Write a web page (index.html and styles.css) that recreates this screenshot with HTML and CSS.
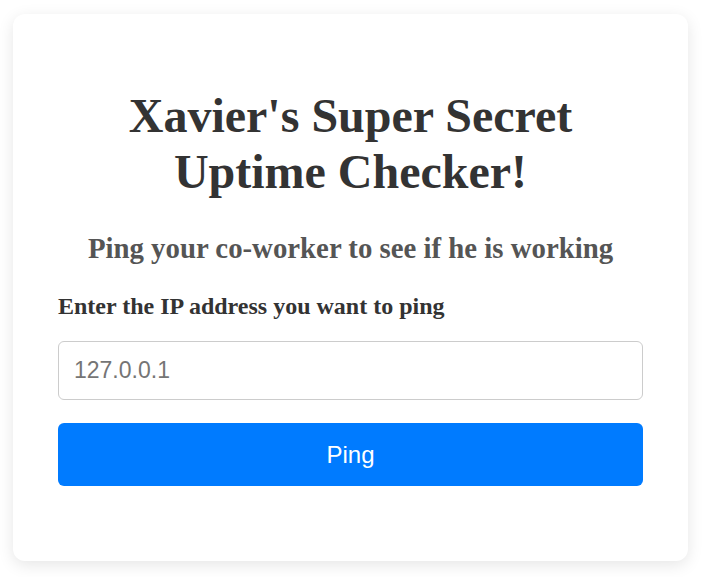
FILE: index.html
```html
<!DOCTYPE html>
<html lang="en">
<head>
<meta charset="utf-8">
<title>Uptime Checker</title>
<link rel="stylesheet" href="styles.css">
</head>
<body>
<div class="card">
  <h1 class="title">Xavier's Super Secret Uptime Checker!</h1>
  <h2 class="subtitle">Ping your co-worker to see if he is working</h2>
  <form class="form">
    <label class="label" for="ip">Enter the IP address you want to ping</label>
    <input class="input" id="ip" type="text" placeholder="127.0.0.1">
    <button class="button" type="button">Ping</button>
  </form>
</div>
</body>
</html>
```

FILE: styles.css
```css
html, body {
  margin: 0;
  padding: 0;
  background: #ffffff;
}
body {
  font-family: "Liberation Serif", "Times New Roman", serif;
  color: #333;
  display: flex;
  justify-content: center;
  padding: 14px 15px 16px 13px;
}
.card {
  box-sizing: border-box;
  width: 675px;
  height: 547px;
  background: #fff;
  border-radius: 12px;
  box-shadow: 0 4px 16px rgba(0, 0, 0, 0.1);
  padding: 45px 45px;
}
.title {
  font-size: 48px;
  font-weight: bold;
  text-align: center;
  line-height: 56px;
  margin: 29px 60px 32px;
  color: #333;
}
.subtitle {
  font-size: 28.8px;
  font-weight: bold;
  text-align: center;
  color: #555;
  margin: 0 0 28px;
}
.form {
  display: flex;
  flex-direction: column;
}
.label {
  font-size: 24px;
  font-weight: bold;
  color: #333;
  margin-bottom: 21px;
}
.input {
  box-sizing: border-box;
  height: 59px;
  border: 1px solid #ccc;
  border-radius: 6px;
  padding: 0 15px;
  font-family: "Liberation Sans", Arial, sans-serif;
  font-size: 23px;
  color: #333;
  margin-bottom: 23px;
}
.input::placeholder {
  color: #757575;
}
.button {
  height: 63px;
  border: none;
  border-radius: 6px;
  background: #007bff;
  color: #fff;
  font-family: "Liberation Sans", Arial, sans-serif;
  font-size: 24px;
}
```
